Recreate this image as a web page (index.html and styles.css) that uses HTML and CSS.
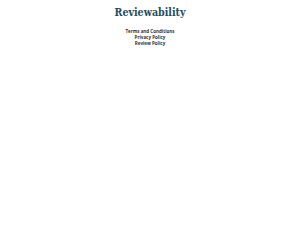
FILE: index.html
```html
<!DOCTYPE html>
<html lang="en">
<head>
  <meta charset="UTF-8">
  <title>Reviewability</title>
  <link rel="stylesheet" href="styles.css">
</head>
<body>
  <div class="page">
    <h1 class="brand">Reviewability</h1>
    <nav class="policy-links">
      <a href="#">Terms and Conditions</a>
      <a href="#">Privacy Policy</a>
      <a href="#">Review Policy</a>
    </nav>
  </div>
</body>
</html>
```

FILE: styles.css
```css
body {
  margin: 0;
  background-color: #ffffff;
  font-family: 'Open Sans', sans-serif;
}

.page {
  display: flex;
  flex-direction: column;
  align-items: center;
  padding-top: 5px;
}

.brand {
  margin: 0;
  font-family: 'DejaVu Serif', serif;
  font-stretch: condensed;
  font-weight: bold;
  font-size: 10.6px;
  line-height: 15px;
  color: #1d4f5c;
}

.policy-links {
  display: flex;
  flex-direction: column;
  align-items: center;
  margin-top: 8px;
}

.policy-links a {
  font-size: 4.5px;
  font-weight: 700;
  line-height: 6px;
  color: #333333;
  text-decoration: none;
}
```
